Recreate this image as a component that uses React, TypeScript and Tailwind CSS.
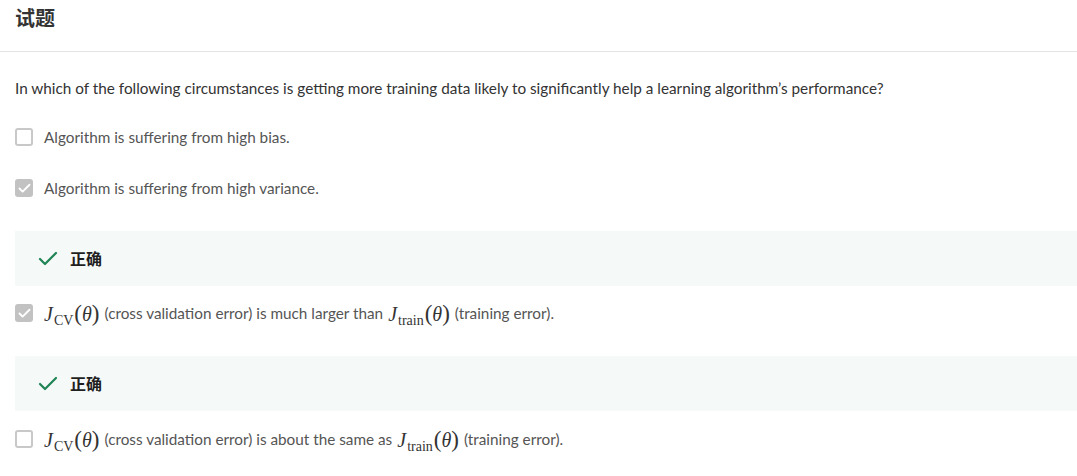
import Check from 'lucide-react/dist/esm/icons/check';

const sans = "font-['Lato','Noto_Sans_CJK_SC',sans-serif]";

const Box = ({ checked }: { checked: boolean }) =>
    checked ? (
        <span className="flex h-[18px] w-[18px] shrink-0 items-center justify-center rounded-[3px] bg-[#c2c2c2]">
            <Check size={15} strokeWidth={3} className="text-white" />
        </span>
    ) : (
        <span className="h-[18px] w-[18px] shrink-0 rounded-[3px] border-2 border-[#c8c8c8] bg-white" />
    );

const Jfn = ({ sub }: { sub: string }) => (
    <span className="font-['Liberation_Serif',serif] text-[#333] text-[20px] leading-none whitespace-nowrap">
        <i>J</i>
        <span className="text-[14px] relative top-[4px] ml-[1px]">{sub}</span>
        <span className="text-[23px] ml-[1px]">(</span>
        <i>θ</i>
        <span className="text-[23px]">)</span>
    </span>
);

const Option = ({ checked, children, className }: { checked: boolean; children: React.ReactNode; className: string }) => (
    <div className={`flex h-6 items-center gap-[11px] ${className}`}>
        <Box checked={checked} />
        <div className="text-[15.3px] text-[#555] flex items-center gap-[5px]">{children}</div>
    </div>
);

const Correct = ({ className }: { className: string }) => (
    <div className={`flex h-[55px] items-center bg-[#f5f9f8] pl-[21px] ${className}`}>
        <Check size={24} strokeWidth={2.2} className="text-[#1f8354]" />
        <span className="ml-[10px] text-[16px] font-bold text-[#1f1f1f]">正确</span>
    </div>
);

export default function App() {
    return (
        <div className={`${sans} bg-white w-[1077px] h-[476px] overflow-hidden`}>
            <div className="h-[52px] border-b border-[#e3e3e3] px-[15px] pt-[4px]">
                <h2 className="text-[20px] leading-7 font-bold text-[#333]">试题</h2>
            </div>
            <div className="pl-[15px]">
                <p className="mt-6 flex h-6 items-center text-[15.3px] text-[#333]">
                    In which of the following circumstances is getting more training data likely to significantly help a learning algorithm’s performance?
                </p>
                <Option checked={false} className="mt-[25px]">Algorithm is suffering from high bias.</Option>
                <Option checked className="mt-[27px]">Algorithm is suffering from high variance.</Option>
                <Correct className="mt-[31px]" />
                <Option checked className="mt-[15px]">
                    <Jfn sub="CV" />
                    <span>(cross validation error) is much larger than</span>
                    <Jfn sub="train" />
                    <span>(training error).</span>
                </Option>
                <Correct className="mt-[31px]" />
                <Option checked={false} className="mt-[16px]">
                    <Jfn sub="CV" />
                    <span>(cross validation error) is about the same as</span>
                    <Jfn sub="train" />
                    <span>(training error).</span>
                </Option>
            </div>
        </div>
    );
}
